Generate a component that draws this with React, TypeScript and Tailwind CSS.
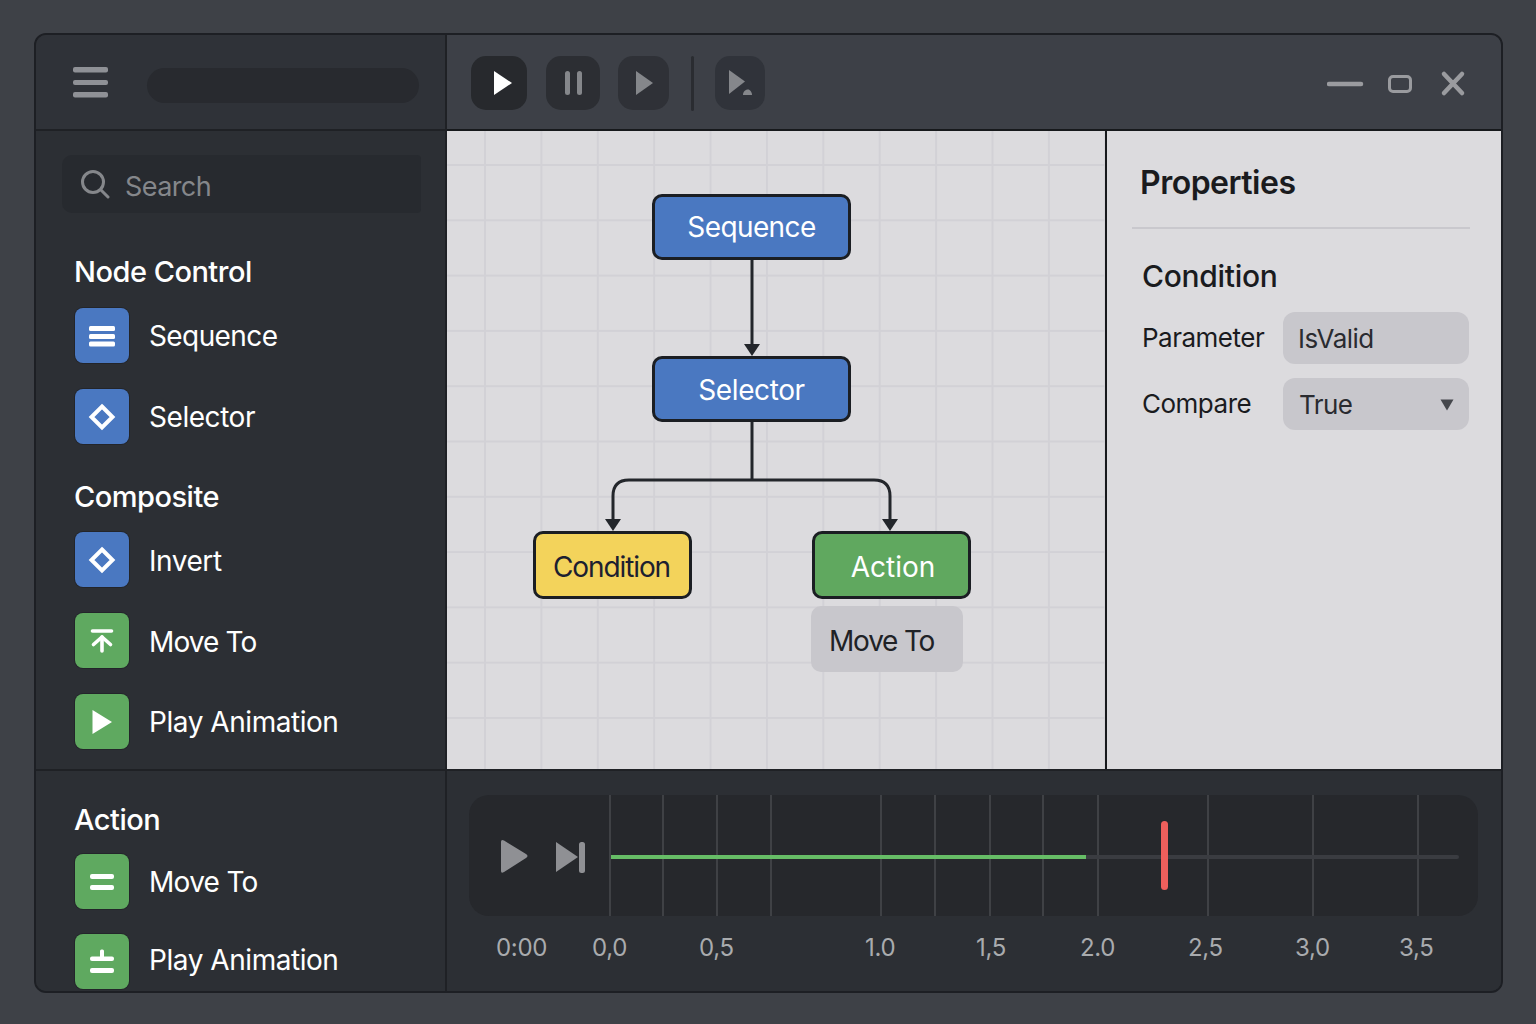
import React from 'react';

const timelineTicks = [610, 663, 717, 771, 881, 935, 990, 1043, 1098, 1208, 1313, 1418];

const timeLabels = [
  { text: '0:00', left: 497 },
  { text: '0,0', left: 593 },
  { text: '0,5', left: 700 },
  { text: '1.0', left: 866 },
  { text: '1,5', left: 977 },
  { text: '2.0', left: 1081 },
  { text: '2,5', left: 1189 },
  { text: '3,0', left: 1296 },
  { text: '3,5', left: 1400 },
];

function SeqIcon() {
  return (
    <svg width="28" height="24" viewBox="0 0 28 24" fill="#fff">
      <rect x="1" y="2" width="26" height="5" rx="1.5" />
      <rect x="1" y="10" width="26" height="5" rx="1.5" />
      <rect x="1" y="17.5" width="26" height="5" rx="1.5" />
    </svg>
  );
}

function DiamondIcon() {
  return (
    <svg width="28" height="28" viewBox="0 0 28 28" fill="none" stroke="#fff" strokeWidth="4">
      <path d="M14 3.5 L24.5 14 L14 24.5 L3.5 14 Z" />
    </svg>
  );
}

function UpIcon() {
  return (
    <svg width="24" height="24" viewBox="0 0 24 24" fill="none" stroke="#fff" strokeWidth="3.6" strokeLinecap="round" strokeLinejoin="round">
      <path d="M2.5 2 H21.5" />
      <path d="M12 8 V22" />
      <path d="M3.5 15.5 L12 8 L20.5 15.5" />
    </svg>
  );
}

function PlayIcon() {
  return (
    <svg width="24" height="26" viewBox="0 0 24 26" fill="#fff">
      <path d="M2.5 1 L22 13 L2.5 25 Z" />
    </svg>
  );
}

function EqualIcon() {
  return (
    <svg width="26" height="20" viewBox="0 0 26 20" fill="#fff">
      <rect x="1" y="2" width="24" height="5" rx="2" />
      <rect x="1" y="13" width="24" height="5" rx="2" />
    </svg>
  );
}

function PlusMinusIcon() {
  return (
    <svg width="26" height="26" viewBox="0 0 26 26" fill="#fff">
      <rect x="11" y="0.5" width="4" height="9" rx="1.5" />
      <rect x="1" y="7.5" width="24" height="4.5" rx="2" />
      <rect x="1" y="19" width="24" height="5" rx="2" />
    </svg>
  );
}

function PaletteItem({ color, icon, label, className, labelClassName }: { color: 'blue' | 'green'; icon: React.ReactNode; label: string; className?: string; labelClassName?: string }) {
  return (
    <div className={`flex items-center ${className ?? ''}`}>
      <div className={`w-[54px] h-[55px] ml-[39px] rounded-[8px] shadow-[0_0_0_1px_#23252a] flex items-center justify-center ${color === 'blue' ? 'bg-[#4a78c1]' : 'bg-[#5fa960]'}`}>
        {icon}
      </div>
      <span className={`ml-[20px] text-[28px] leading-none text-white ${labelClassName ?? 'tracking-[-0.45px]'}`}>{label}</span>
    </div>
  );
}

function SectionTitle({ children, className }: { children: React.ReactNode; className?: string }) {
  return <div className={`h-[36px] leading-[36px] ml-[38px] text-[29px] tracking-[-0.5px] font-medium text-white ${className ?? ''}`}>{children}</div>;
}

function FlowNode({ label, className }: { label: string; className: string }) {
  return (
    <div className={`absolute flex items-center justify-center rounded-[10px] border-[3px] border-[#1b1e23] text-[28px] leading-none ${className}`}>
      {label}
    </div>
  );
}

export default function App() {
  return (
    <div className="w-[1536px] h-[1024px] bg-[#3e4147] pt-[33px] pl-[34px] font-['Inter','Liberation_Sans',sans-serif] overflow-hidden">
      <div className="w-[1469px] h-[960px] rounded-[12px] border-2 border-[#1d1f24] overflow-hidden grid grid-cols-[411px_1fr] grid-rows-[96px_640px_1fr] bg-[#2c2f34]">
        {/* Top left */}
        <div className="bg-[#2f3238] border-r-2 border-b-2 border-[#1f2125] flex items-center pt-[2px]">
          <svg className="ml-[37px]" width="35" height="32" viewBox="0 0 35 32" fill="#8f9196">
            <rect x="0" y="0" width="35" height="5.5" rx="2" />
            <rect x="0" y="13" width="35" height="5" rx="2" />
            <rect x="0" y="25" width="35" height="5.5" rx="2" />
          </svg>
          <div className="ml-[39px] mt-[5px] w-[272px] h-[35px] rounded-full bg-[#282a2f]" />
        </div>

        {/* Toolbar */}
        <div className="bg-[#3d4047] border-b-2 border-[#17191c] flex items-center pl-[24px] pr-[34px] pt-[2px]">
          <div className="w-[56px] h-[54px] rounded-[15px] bg-[#27292d] flex items-center pl-[22px]">
            <svg width="20" height="24" viewBox="0 0 20 24" fill="#fff"><path d="M1 0 L19 12 L1 24 Z" /></svg>
          </div>
          <div className="ml-[19px] w-[54px] h-[54px] rounded-[15px] bg-[#2c2e33] flex items-center justify-center gap-[7px]">
            <div className="w-[5px] h-[24px] rounded-full bg-[#85878b]" />
            <div className="w-[5px] h-[24px] rounded-full bg-[#85878b]" />
          </div>
          <div className="ml-[18px] w-[51px] h-[54px] rounded-[15px] bg-[#2f3137] flex items-center pl-[17px]">
            <svg width="19" height="24" viewBox="0 0 19 24" fill="#85878b"><path d="M1 0 L18 12 L1 24 Z" /></svg>
          </div>
          <div className="ml-[22px] w-[3px] h-[55px] rounded-full bg-[#2a2c31]" />
          <div className="ml-[21px] w-[50px] h-[54px] rounded-[15px] bg-[#30333a] flex items-center justify-center">
            <svg width="24" height="26" viewBox="0 0 24 26" fill="#85878b">
              <path d="M1 0 L17 11.5 L1 24 Z" />
              <path d="M15 25 C15 21 18 19.5 20 19.5 C22 19.5 24 22 24 25 Z" />
            </svg>
          </div>
          <svg className="ml-auto mt-[1px]" width="140" height="30" viewBox="0 0 140 30" fill="none" stroke="#9a9b9f" strokeLinecap="round">
            <path d="M2 15 H34" strokeWidth="4.5" />
            <rect x="62.5" y="7.5" width="21" height="15" rx="3.5" strokeWidth="3" />
            <path d="M117 5 L135 24 M135 5 L117 24" strokeWidth="4.5" />
          </svg>
        </div>

        {/* Palette */}
        <div className="border-r-2 border-b-2 border-[#1f2125] bg-[#2c2f34] pt-[24px]">
          <div className="ml-[26px] w-[359px] h-[58px] rounded-l-[10px] rounded-r-[4px] bg-[#272a2f] flex items-center">
            <svg className="ml-[18px]" width="30" height="30" viewBox="0 0 30 30" fill="none" stroke="#85878b" strokeWidth="3" strokeLinecap="round">
              <circle cx="13" cy="13" r="10.5" />
              <path d="M21 21 L28 28" />
            </svg>
            <span className="ml-[15px] mt-[4px] text-[27px] tracking-[-0.6px] leading-none text-[#85878b]">Search</span>
          </div>
          <SectionTitle className="mt-[41px]">Node Control</SectionTitle>
          <PaletteItem className="mt-[18px]" color="blue" icon={<SeqIcon />} label="Sequence" labelClassName="tracking-[-0.6px]" />
          <PaletteItem className="mt-[26px]" color="blue" icon={<DiamondIcon />} label="Selector" />
          <SectionTitle className="mt-[35px]">Composite</SectionTitle>
          <PaletteItem className="mt-[17px]" color="blue" icon={<DiamondIcon />} label="Invert" labelClassName="tracking-[-0.45px] pt-[2px]" />
          <PaletteItem className="mt-[26px]" color="green" icon={<UpIcon />} label="Move To" labelClassName="tracking-[-0.9px] pt-[3px]" />
          <PaletteItem className="mt-[26px]" color="green" icon={<PlayIcon />} label="Play Animation" />
        </div>

        {/* Canvas and properties */}
        <div className="flex min-h-0 border-b-2 border-[#1f2125]">
          <div className="relative w-[660px] h-full bg-[#dcdbde] border-r-2 border-[#17191c] bg-[linear-gradient(to_right,#d2d1d6_1.5px,transparent_1.5px),linear-gradient(to_bottom,#d2d1d6_1.5px,transparent_1.5px)] bg-[size:56.4px_55.3px] bg-[position:37px_33px]">
            <svg className="absolute inset-0" width="658" height="638" viewBox="0 0 658 638" fill="none" stroke="#23262b" strokeWidth="3">
              <path d="M305 128 V216" />
              <path d="M305 290 V349" />
              <path d="M166 392 V365 Q166 349 182 349 H427 Q443 349 443 365 V392" />
              <path d="M297 213 H313 L305 225 Z" fill="#23262b" stroke="none" />
              <path d="M158 388 H174 L166 400 Z" fill="#23262b" stroke="none" />
              <path d="M435 388 H451 L443 400 Z" fill="#23262b" stroke="none" />
            </svg>
            <FlowNode label="Sequence" className="left-[205px] top-[63px] w-[199px] h-[66px] bg-[#4a78c1] text-white tracking-[-0.6px]" />
            <FlowNode label="Selector" className="left-[205px] top-[225px] w-[199px] h-[66px] bg-[#4a78c1] text-white tracking-[-0.4px] pt-[2px]" />
            <FlowNode label="Condition" className="left-[86px] top-[400px] w-[159px] h-[68px] bg-[#f3d35b] text-[#1c2030] tracking-[-1.1px] pt-[3px] pr-[2px]" />
            <FlowNode label="Action" className="left-[365px] top-[400px] w-[159px] h-[68px] bg-[#60a85f] text-white pt-[4px] pl-[3px]" />
            <div className="absolute left-[364px] top-[475px] w-[152px] h-[66px] rounded-[10px] bg-[#c8c7cc] text-[#202226] text-[28px] tracking-[-1.2px] leading-none flex items-center pl-[18px] pt-[3px]">
              Move To
            </div>
          </div>

          <div className="flex-1 bg-[#dcdbde] pt-[32px] text-[#1a1b1e]">
            <div className="ml-[33px] h-[40px] leading-[40px] text-[32px] tracking-[-0.5px] font-semibold">Properties</div>
            <div className="ml-[25px] mr-[31px] mt-[24px] h-[2px] bg-[#c9c8cd]" />
            <div className="ml-[35px] mt-[28px] h-[38px] leading-[38px] text-[30px] tracking-[-0.3px] font-medium">Condition</div>
            <div className="ml-[35px] mt-[17px] flex items-center">
              <span className="w-[141px] text-[26px] tracking-[-0.5px] leading-none">Parameter</span>
              <div className="w-[186px] h-[52px] rounded-[12px] bg-[#c8c7cc] flex items-center pl-[15px] pt-[2px] text-[26px] tracking-[-0.5px] leading-none text-[#2a2b30]">IsValid</div>
            </div>
            <div className="ml-[35px] mt-[14px] flex items-center">
              <span className="w-[141px] text-[26px] tracking-[-0.5px] leading-none">Compare</span>
              <div className="w-[186px] h-[52px] rounded-[12px] bg-[#c8c7cc] flex items-center justify-between pl-[16px] pr-[15px] pt-[2px] text-[26px] tracking-[-0.6px] leading-none text-[#2a2b30]">
                True
                <svg width="14" height="12" viewBox="0 0 14 12" fill="#45474c"><path d="M0.5 0.5 H13.5 L7 11.5 Z" /></svg>
              </div>
            </div>
          </div>
        </div>

        {/* Actions */}
        <div className="border-r-2 border-[#1f2125] bg-[#2c2f34] pt-[31px] overflow-hidden">
          <SectionTitle>Action</SectionTitle>
          <PaletteItem className="mt-[16px]" color="green" icon={<EqualIcon />} label="Move To" labelClassName="tracking-[-0.7px]" />
          <PaletteItem className="mt-[25px]" color="green" icon={<PlusMinusIcon />} label="Play Animation" labelClassName="tracking-[-0.45px] -mt-[3px]" />
        </div>

        {/* Timeline */}
        <div className="relative bg-[#2c2f34] pt-[24px] pl-[22px] overflow-hidden">
          <div className="relative w-[1009px] h-[121px] rounded-[20px] bg-[#26282c] flex items-center pl-[30px] overflow-hidden">
            <svg width="90" height="36" viewBox="0 0 90 36" fill="#8f9094" className="mt-[2px]">
              <path d="M2 3 Q2 0 5 1.5 L27 15 Q30 17 27 19 L5 33 Q2 35 2 32 Z" />
              <path d="M57 3 L79 18 L57 33 Z" />
              <rect x="80" y="3" width="6" height="31" rx="2.5" />
            </svg>
            {timelineTicks.map((x) => (
              <div key={x} className="absolute top-0 bottom-0 w-[1.5px] bg-[#3f4145]" style={{ left: x - 470 }} />
            ))}
            <div className="absolute left-[142px] top-[60px] w-[848px] h-[4px] rounded-full bg-[#3a3c41]" />
            <div className="absolute left-[142px] top-[60px] w-[475px] h-[4px] bg-[#66bd66]" />
            <div className="absolute left-[692px] top-[26px] w-[7px] h-[69px] rounded-full bg-[#ef5f5c]" />
          </div>
          {timeLabels.map((l) => (
            <span key={l.text} className="absolute top-[165px] text-[24px] tracking-[-0.3px] leading-none text-[#a9abae]" style={{ left: l.left - 448 }}>
              {l.text}
            </span>
          ))}
        </div>
      </div>
    </div>
  );
}
